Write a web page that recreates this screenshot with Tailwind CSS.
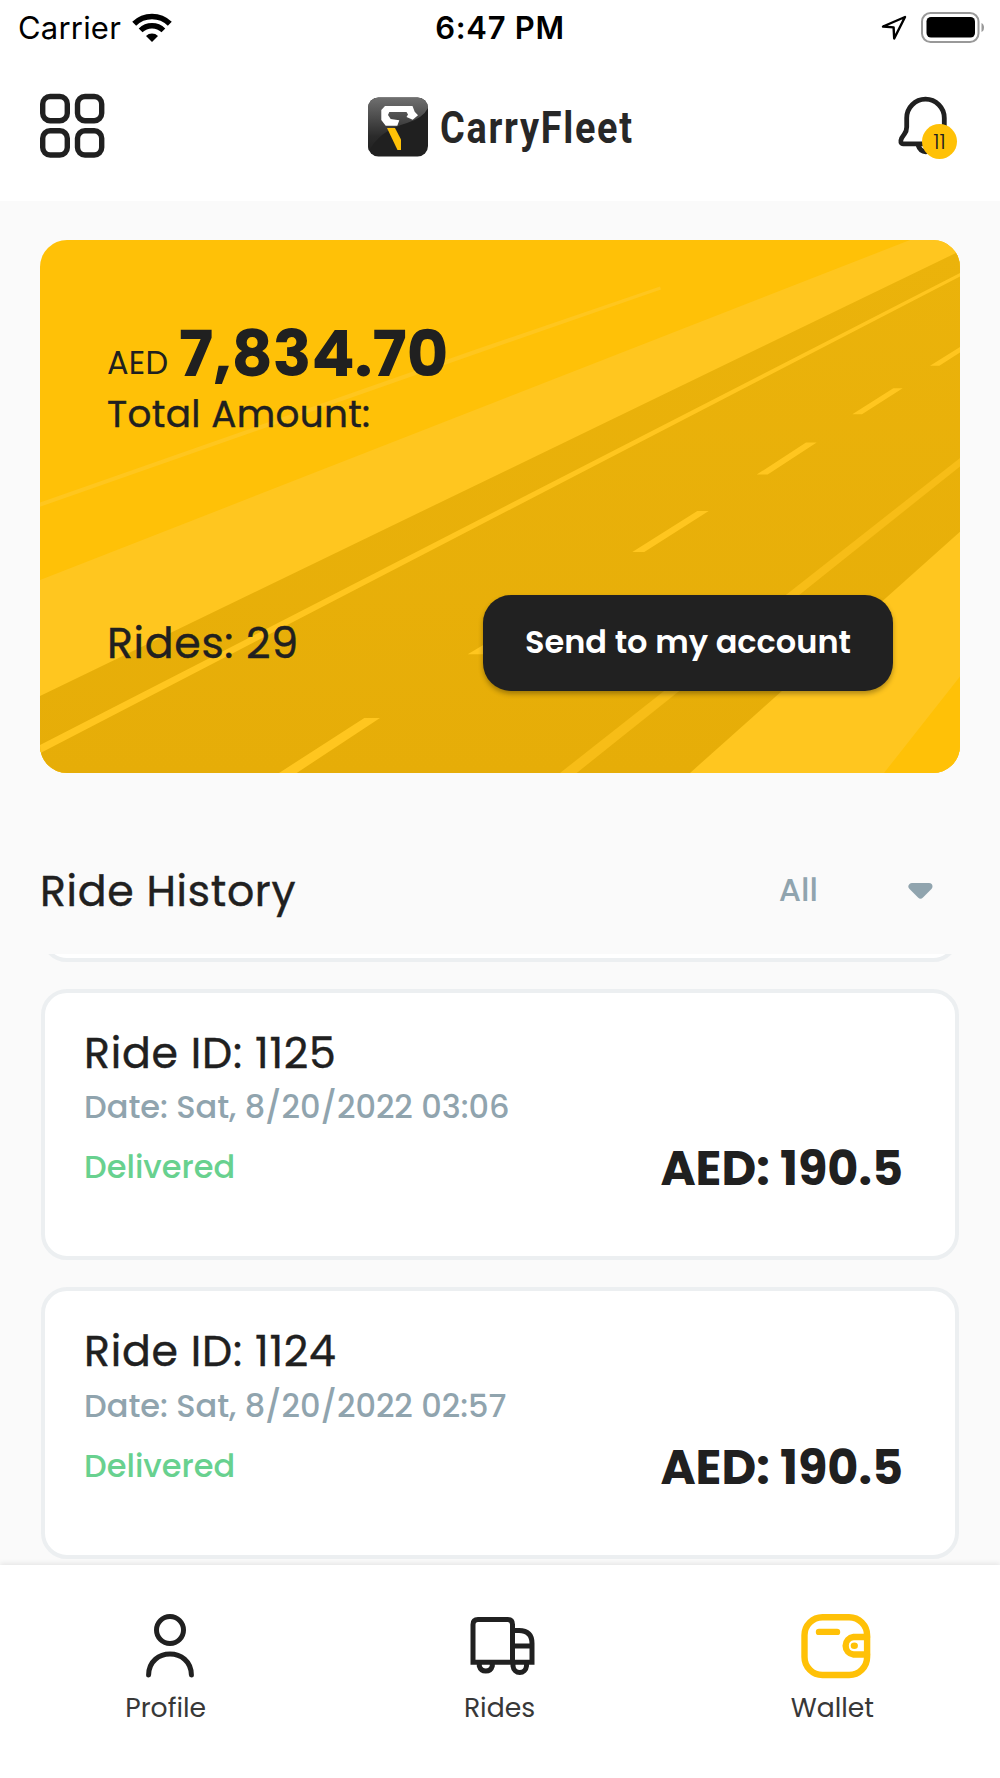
<!DOCTYPE html>
<html lang="en">
<head>
<meta charset="utf-8">
<title>CarryFleet Wallet</title>
<script src="https://cdn.jsdelivr.net/npm/@tailwindcss/browser@4"></script>
</head>
<body class="bg-[#fafafa]">
<div class="flex h-[1778px] w-[1000px] flex-col overflow-hidden bg-[#fafafa] font-[Poppins,Inter,sans-serif] text-[#202020]">

  <!-- Status bar -->
  <div class="grid h-[55px] shrink-0 grid-cols-3 items-center bg-white pl-[18px] pr-[14px] font-[Inter,sans-serif] text-[31px] leading-[55px] text-black">
    <div class="flex items-center gap-[11px]">
      <span class="tracking-[0.200px]">Carrier</span>
      <svg class="h-[30px] w-[40px]" viewBox="0 0 40 30" fill="none" stroke="#000">
        <path d="M2.2 10.8a25.5 25.5 0 0 1 35.6 0" stroke-width="5.6"/>
        <path d="M8.6 17.4a16.4 16.4 0 0 1 22.8 0" stroke-width="5.4"/>
        <path d="M14 23a8.600 8.600 0 0 1 12 0l-6 6z" fill="#000" stroke="none"/>
      </svg>
    </div>
    <div class="pr-[4px] text-center font-semibold"><span class="tracking-[0.700px]">6:47 PM</span></div>
    <div class="flex items-center justify-end gap-[13px]">
      <svg class="h-[26px] w-[26px]" viewBox="0 0 26 26" fill="none" stroke="#000" stroke-width="2.400" stroke-linejoin="round"><path d="M2 11.500 24 2 13.200 23.500 12.600 12.400z"/></svg>
      <svg class="h-[32px] w-[66px]" viewBox="0 0 66 32"><rect x="2" y="1" width="56.500" height="29" rx="8.500" fill="none" stroke="#999" stroke-width="2"/><rect x="6.500" y="5" width="48.500" height="20.500" rx="4.500" fill="#000"/><path d="M61.500 11q2.500 1 2.500 4.500t-2.500 4.500z" fill="#999"/></svg>
    </div>
  </div>

  <!-- App header -->
  <header class="flex h-[146px] shrink-0 items-center justify-between bg-white pb-[4px] pl-[39px] pr-[41px]">
    <svg class="h-[66px] w-[66px]" viewBox="0 0 66 66" fill="none" stroke="#202020" stroke-width="5.400">
      <rect x="3.700" y="3.500" width="24.600" height="24.200" rx="7.500"/><rect x="38.500" y="3.500" width="24.200" height="24.200" rx="7.500"/>
      <rect x="3.700" y="37.800" width="24.600" height="24.200" rx="7.500"/><rect x="38.500" y="37.800" width="24.200" height="24.200" rx="7.500"/>
    </svg>
    <div class="flex w-[267px] items-center gap-[12px] pt-[2px]">
      <svg class="h-[60px] w-[60px] shrink-0" viewBox="0 0 60 60">
        <defs><linearGradient id="gloss" x1="0" y1="0" x2="0" y2="1"><stop offset="0" stop-color="#707070"/><stop offset=".7" stop-color="#2b2b2b"/><stop offset="1" stop-color="#202020"/></linearGradient>
        <clipPath id="tile"><rect y=".5" width="60" height="59" rx="10.500"/></clipPath></defs>
        <g clip-path="url(#tile)"><rect width="60" height="60" fill="#202020"/><path d="M0 0H60V11Q55 21 39 26Q10 34 0 56z" fill="url(#gloss)"/></g>
        <path d="M17 9H44.500L46.700 14.700 50 18.300 44.700 22.700 38.500 20 40 17.500 38.500 15H21.300L20 18 22.700 22 31.300 23.300 29.300 28.700H17.700L13.300 23V13z" fill="#fff"/>
        <path d="M19 31h8L33 42.500v10.500h-3.500z" fill="#ffc107"/>
      </svg>
      <span class="inline-block origin-left scale-x-[0.86] pt-[2px] font-[Roboto,sans-serif] text-[44px] font-bold leading-[60px] tracking-[2px] text-[#272727]">CarryFleet</span>
    </div>
    <div class="relative h-[64px] w-[62px]">
      <svg class="h-[64px] w-[62px]" viewBox="897 94 62 64" fill="none" stroke="#202020" stroke-width="4.800" stroke-linecap="round" stroke-linejoin="round"><path d="M944.300 128V118a18.800 18.800 0 0 0-37.600 0V127q0 4-2.300 7l-2.700 4q-2.500 5.500 1.800 5.800H936M918 145q2 6.500 8 6.800"/></svg>
      <span class="absolute left-[25px] top-[30px] h-[35px] w-[35px] rounded-full bg-[#ffc107] text-center text-[21.333px] font-light leading-[35px]">11</span>
    </div>
  </header>

  <!-- Balance -->
  <section class="relative mx-[40px] mt-[39px] h-[533px] shrink-0 overflow-hidden rounded-[27px] bg-[#ffc107]">
    <svg class="absolute inset-0 h-full w-full" viewBox="40 240 920 533" preserveAspectRatio="none">
      <defs><linearGradient id="road" x1="0" y1="0" x2="0" y2="1"><stop offset="0" stop-color="#ebb30b"/><stop offset="1" stop-color="#e6ad08"/></linearGradient></defs>
      <path d="M40 502.500 480 348 660 286.400 661 289.500 480 352.500 40 506.800z" fill="#ffc61e"/>
      <path d="M40 580 910 240H960V773H40z" fill="#ffc61f"/>
      <path d="M40 696 960 251V531.800L690 773H40z" fill="url(#road)"/>
      <path d="M960 676.400V773H884z" fill="#ffc107"/>
      <path d="M40 745 960 272.900V276.400L40 753.200zM364.300 717.900H380L296.700 773H279zM467.700 654.300H490V641zM697.300 511H708.700L644.300 552H632.300zM806 442.500H816.700L767.700 474.600H756.700zM893.300 388.200H902.700L862 414.300H852.300zM960 347V352.500L939.300 365.700H930z" fill="#ffc61f"/>
      <path d="M960 457.900V466.400L576.700 773H560z" fill="#f7bd17"/>
    </svg>
    <div class="relative flex h-full flex-col pb-[82px] pl-[67px] pr-[67px] pt-[83px]">
      <div class="flex h-[62px] items-center">
        <span class="w-[72px] pt-[17px] text-[32px] leading-[40px] tracking-[0.300px]">AED</span>
        <span class="text-[63.800px] font-bold leading-[62px]">7,834.70</span>
      </div>
      <div class="mt-[5px] h-[48px] text-[37.333px] leading-[48px] tracking-[0.350px] [-webkit-text-stroke:0.4px_#202020]">Total Amount:</div>
      <div class="mt-auto flex h-[96px] items-center justify-between">
        <span class="text-[42.667px] leading-[96px] tracking-[0.667px] [-webkit-text-stroke:0.4px_#202020]">Rides: 29</span>
        <button class="h-[96px] w-[410px] rounded-[28px] bg-[#212121] pb-[2px] text-[32px] font-semibold text-white shadow-[0_3px_5px_rgba(0,0,0,0.3)]">Send to my account</button>
      </div>
    </div>
  </section>

  <!-- History heading and filter -->
  <div class="flex h-[181px] shrink-0 items-start justify-between pl-[40px] pr-[67px] pt-[88px]">
    <h2 class="text-[42.667px] leading-[60px] tracking-[0.667px] [-webkit-text-stroke:0.4px_#202020]">Ride History</h2>
    <div class="flex gap-[90px] text-[#90a4ae]">
      <span class="text-[32px] font-medium leading-[57px]">All</span>
      <svg class="mt-[21px] h-[18px] w-[25px]" viewBox="0 0 25 18"><path d="M4 4.500H21L12.500 13z" fill="#90a4ae" stroke="#90a4ae" stroke-width="7" stroke-linejoin="round"/></svg>
    </div>
  </div>

  <!-- Ride list -->
  <div class="flex h-[611px] shrink-0 flex-col gap-[27px] overflow-hidden px-[41px]">
    <article class="mt-[-264px] h-[271.500px] shrink-0 rounded-[26px] border-4 border-[#eceff1] bg-white"></article>

    <article class="h-[271.500px] shrink-0 rounded-[26px] border-4 border-[#eceff1] bg-white pl-[39px] pr-[52px] pt-[31px]">
      <h3 class="h-[57px] text-[42.667px] leading-[58px] tracking-[0.750px] [-webkit-text-stroke:0.4px_#202020]">Ride ID: 1125</h3>
      <p class="h-[52px] text-[32px] font-medium leading-[52px] text-[#90a4ae]">Date: Sat, 8/20/2022 03:06</p>
      <div class="mt-[8px] flex h-[52px] items-center justify-between">
        <span class="text-[32px] font-medium text-[#68d18f]">Delivered</span>
        <span class="pt-[4px] text-[47.800px] font-bold leading-[52px]">AED: 190.5</span>
      </div>
    </article>

    <article class="h-[271.500px] shrink-0 rounded-[26px] border-4 border-[#eceff1] bg-white pl-[39px] pr-[52px] pt-[32px]">
      <h3 class="h-[57px] text-[42.667px] leading-[57px] tracking-[0.750px] [-webkit-text-stroke:0.4px_#202020]">Ride ID: 1124</h3>
      <p class="h-[52px] text-[32px] font-medium leading-[52px] text-[#90a4ae]">Date: Sat, 8/20/2022 02:57</p>
      <div class="mt-[8px] flex h-[52px] items-center justify-between">
        <span class="text-[32px] font-medium text-[#68d18f]">Delivered</span>
        <span class="pt-[4px] text-[47.800px] font-bold leading-[52px]">AED: 190.5</span>
      </div>
    </article>
  </div>

  <!-- Tab bar -->
  <nav class="relative grid flex-1 grid-cols-3 bg-white pt-[43px] text-[26.667px] leading-[40px] text-[#383838] shadow-[0_-2px_5px_rgba(0,0,0,0.08)]">
    <a class="flex flex-col items-center">
      <svg class="ml-[7px] h-[76px] w-[80px]" viewBox="130 1608 80 76" fill="none" stroke="#202020" stroke-width="5" stroke-linecap="round"><circle cx="170" cy="1630" r="13.500"/><path d="M148.600 1675C149 1647 191 1647 191.400 1675"/></svg>
      <span class="mt-[4px] pr-[2px] leading-[40px]">Profile</span>
    </a>
    <a class="flex flex-col items-center">
      <svg class="ml-[6px] h-[76px] w-[80px]" viewBox="463.500 1608 80 76" fill="none" stroke="#202020" stroke-width="5"><path d="M473.500 1662.200V1624.500q0-5 5-5H508q5 0 5 5V1662.200M471 1662.200H535M513 1630.500H519.500Q532.500 1630.500 532.500 1643.500V1662.200M513 1646H532.500M479.800 1663V1666a6.800 7.200 0 0 0 13 0V1663M513.500 1663V1666a6.800 7.500 0 0 0 13.500 0V1663"/></svg>
      <span class="mt-[4px] pr-[1px] leading-[40px]">Rides</span>
    </a>
    <a class="flex flex-col items-center">
      <svg class="ml-[6px] h-[76px] w-[80px]" viewBox="796 1608 80 76" fill="none" stroke="#ffc107" stroke-width="6.400" stroke-linecap="round"><rect x="804.500" y="1617.200" width="62.600" height="57.800" rx="18"/><path d="M819 1631.900H837M867 1637H853.500a8.800 8.800 0 0 0 0 17.500H867"/><ellipse cx="854.300" cy="1645.700" rx="3.600" ry="3.200" fill="#ffc107" stroke="none"/></svg>
      <span class="mt-[4px] pr-[2px] leading-[40px]">Wallet</span>
    </a>
  </nav>
</div>
</body>
</html>
